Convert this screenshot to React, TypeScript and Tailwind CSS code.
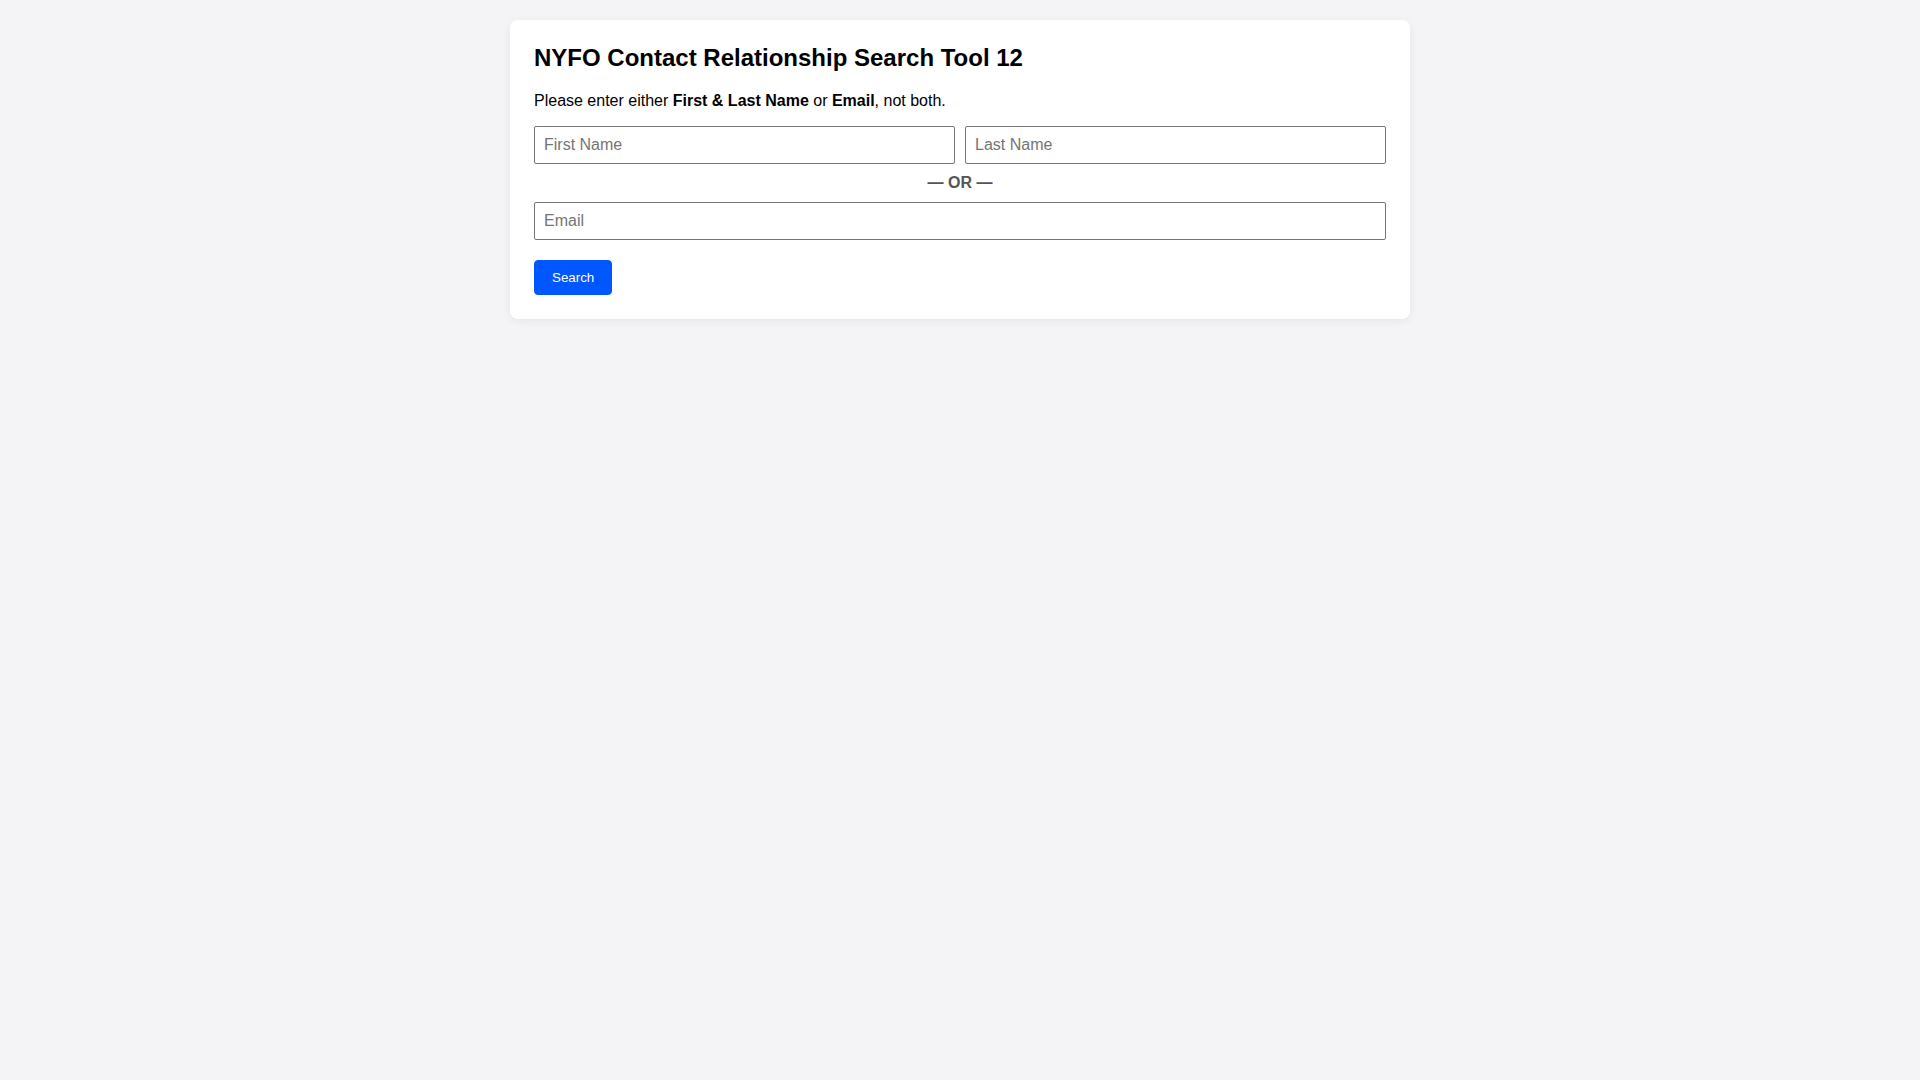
import React from "react";

export default function App() {
  return (
    <div className="min-h-screen w-full bg-[#f4f4f6] pt-5" style={{ fontFamily: '"Liberation Sans", Arial, sans-serif' }}>
      <div className="mx-auto w-[900px] rounded-lg bg-white p-6 shadow-[0_2px_8px_rgba(0,0,0,0.06)]">
        <h2 className="m-0 text-[24px] leading-[1.15] font-bold text-black">NYFO Contact Relationship Search Tool 12</h2>
        <p className="mt-[20px] text-[16px] leading-[1.15] text-black">
          Please enter either <b className="font-bold">First &amp; Last Name</b> or <b className="font-bold">Email</b>, not both.
        </p>
        <div className="mt-[16px] flex gap-[10px]">
          <input
            type="text"
            placeholder="First Name"
            className="h-[38px] flex-1 rounded-[2px] border border-[#767676] bg-white px-[9px] text-[16px] text-black outline-none placeholder:text-[#757575]"
          />
          <input
            type="text"
            placeholder="Last Name"
            className="h-[38px] flex-1 rounded-[2px] border border-[#767676] bg-white px-[9px] text-[16px] text-black outline-none placeholder:text-[#757575]"
          />
        </div>
        <div className="py-[10px] text-center text-[16px] leading-[18px] font-bold text-[#555]">— OR —</div>
        <input
          type="email"
          placeholder="Email"
          className="block h-[38px] w-full rounded-[2px] border border-[#767676] bg-white px-[9px] text-[16px] text-black outline-none placeholder:text-[#757575]"
        />
        <button
          type="button"
          className="mt-5 h-[35px] rounded-[4px] border border-[#0057ff] bg-[#0057ff] px-[17px] pt-[1px] text-[13.33px] text-white"
        >
          Search
        </button>
      </div>
    </div>
  );
}
